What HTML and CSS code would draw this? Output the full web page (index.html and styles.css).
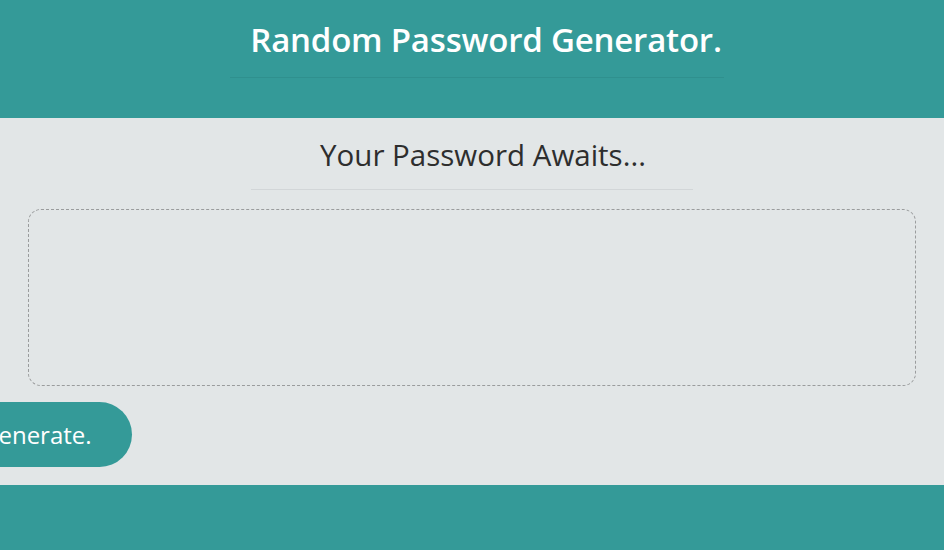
FILE: index.html
```html
<!DOCTYPE html>
<html lang="en">
<head>
<meta charset="utf-8">
<title>Password Generator</title>
<link rel="stylesheet" href="styles.css">
</head>
<body>
  <header class="top">
    <h1 class="title">Random Password Generator.</h1>
    <hr class="top-rule">
  </header>
  <main class="card">
    <h2 class="card-title">Your Password Awaits...</h2>
    <hr class="card-rule">
    <div class="card-body">
      <textarea class="output" readonly></textarea>
    </div>
    <div class="card-footer">
      <button class="btn">Generate.</button>
    </div>
  </main>
  <footer class="bottom"></footer>
</body>
</html>
```

FILE: styles.css
```css
html, body {
  margin: 0;
  padding: 0;
  background: #ffffff;
  font-family: "Open Sans", "Noto Sans", sans-serif;
  overflow: hidden;
}
.top {
  background: #349a98;
  height: 118px;
  box-sizing: border-box;
  padding-top: 18px;
  display: flex;
  flex-direction: column;
  align-items: center;
}
.title {
  margin: 0;
  padding-left: 28px;
  color: #ffffff;
  font-size: 33px;
  font-weight: 600;
  line-height: 44px;
  letter-spacing: -0.2px;
}
.top-rule {
  width: 494px;
  margin: 15px 0 0 10px;
  border: 0;
  border-top: 1px solid #2f908e;
}
.card {
  background: #e2e6e7;
  height: 367px;
  box-sizing: border-box;
  display: flex;
  flex-direction: column;
  align-items: center;
}
.card-title {
  margin: 18px 0 0;
  padding-left: 22px;
  color: #2e2e2e;
  font-size: 29.5px;
  font-weight: 400;
  line-height: 38px;
}
.card-rule {
  width: 442px;
  margin: 15px 0 0;
  border: 0;
  border-top: 1px solid #d2d6d8;
}
.card-body {
  align-self: stretch;
  padding: 19px 28px 0 28px;
}
.output {
  display: block;
  box-sizing: border-box;
  width: 888px;
  height: 177px;
  margin: 0;
  border: 1px dashed #9a9c9d;
  border-radius: 13px;
  background: transparent;
  resize: none;
}
.card-footer {
  align-self: stretch;
  padding-top: 16px;
}
.btn {
  display: block;
  height: 65px;
  margin-left: -57px;
  padding: 0 40px 0 38px;
  border: 0;
  border-radius: 33px;
  background: #349a98;
  color: #ffffff;
  font-family: "Open Sans", "Noto Sans", sans-serif;
  font-size: 24px;
  line-height: 65px;
}
.bottom {
  background: #349a98;
  height: 65px;
}
```
